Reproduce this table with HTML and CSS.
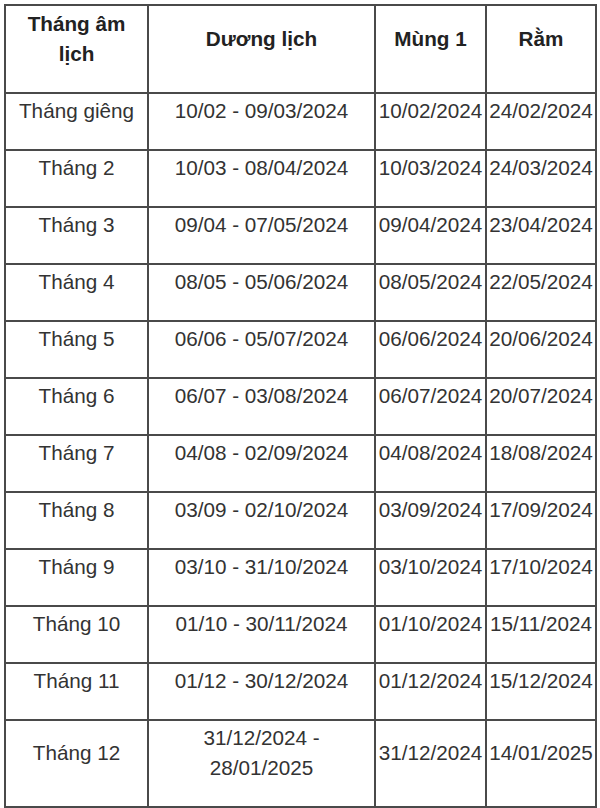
FILE: index.html
```html
<!DOCTYPE html>
<html lang="vi">
<head>
<meta charset="utf-8">
<link rel="stylesheet" href="styles.css">
</head>
<body>
<table class="cal">
<colgroup>
<col class="c1"><col class="c2"><col class="c3"><col class="c4">
</colgroup>
<thead>
<tr>
<th><p>Tháng âm<br>lịch</p></th>
<th><p>Dương lịch</p></th>
<th><p>Mùng 1</p></th>
<th><p>Rằm</p></th>
</tr>
</thead>
<tbody>
<tr><td><p>Tháng giêng</p></td><td><p>10/02 - 09/03/2024</p></td><td><p>10/02/2024</p></td><td><p>24/02/2024</p></td></tr>
<tr><td><p>Tháng 2</p></td><td><p>10/03 - 08/04/2024</p></td><td><p>10/03/2024</p></td><td><p>24/03/2024</p></td></tr>
<tr><td><p>Tháng 3</p></td><td><p>09/04 - 07/05/2024</p></td><td><p>09/04/2024</p></td><td><p>23/04/2024</p></td></tr>
<tr><td><p>Tháng 4</p></td><td><p>08/05 - 05/06/2024</p></td><td><p>08/05/2024</p></td><td><p>22/05/2024</p></td></tr>
<tr><td><p>Tháng 5</p></td><td><p>06/06 - 05/07/2024</p></td><td><p>06/06/2024</p></td><td><p>20/06/2024</p></td></tr>
<tr><td><p>Tháng 6</p></td><td><p>06/07 - 03/08/2024</p></td><td><p>06/07/2024</p></td><td><p>20/07/2024</p></td></tr>
<tr><td><p>Tháng 7</p></td><td><p>04/08 - 02/09/2024</p></td><td><p>04/08/2024</p></td><td><p>18/08/2024</p></td></tr>
<tr><td><p>Tháng 8</p></td><td><p>03/09 - 02/10/2024</p></td><td><p>03/09/2024</p></td><td><p>17/09/2024</p></td></tr>
<tr><td><p>Tháng 9</p></td><td><p>03/10 - 31/10/2024</p></td><td><p>03/10/2024</p></td><td><p>17/10/2024</p></td></tr>
<tr><td><p>Tháng 10</p></td><td><p>01/10 - 30/11/2024</p></td><td><p>01/10/2024</p></td><td><p>15/11/2024</p></td></tr>
<tr><td><p>Tháng 11</p></td><td><p>01/12 - 30/12/2024</p></td><td><p>01/12/2024</p></td><td><p>15/12/2024</p></td></tr>
<tr><td><p>Tháng 12</p></td><td><p>31/12/2024 -<br>28/01/2025</p></td><td><p>31/12/2024</p></td><td><p>14/01/2025</p></td></tr>
</tbody>
</table>
</body>
</html>
```
FILE: styles.css
```css
html, body {
  margin: 0;
  padding: 0;
  background: #fff;
}
body {
  padding: 4px 0 0 4px;
  font-family: "Liberation Sans", Arial, sans-serif;
  color: #333;
}
.cal {
  border-collapse: collapse;
  table-layout: fixed;
  width: 591px;
  font-size: 20.7px;
  line-height: 30px;
}
.c1 { width: 143px; }
.c2 { width: 227px; }
.c3 { width: 111px; }
.c4 { width: 110px; }
.cal th, .cal td {
  border: 2px solid #4a4a4a;
  padding: 2px 0 0 0;
  text-align: center;
  vertical-align: middle;
  white-space: nowrap;
}
.cal th {
  font-weight: bold;
  color: #222;
  padding-top: 3px;
}
.cal p {
  margin: 0 0 23px 0;
}
```
